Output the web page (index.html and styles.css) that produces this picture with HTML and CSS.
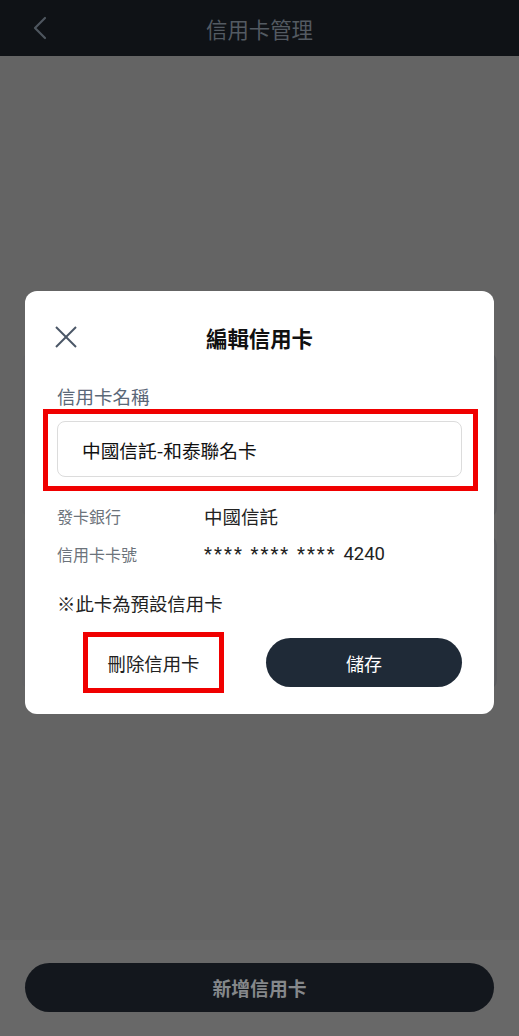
FILE: index.html
```html
<!DOCTYPE html>
<html lang="zh-Hant">
<head>
  <meta charset="UTF-8">
  <meta name="viewport" content="width=device-width, initial-scale=1.0">
  <title>信用卡管理</title>
  <link rel="stylesheet" href="styles.css">
</head>
<body>
  <header class="topbar">
    <svg class="back" width="14" height="24" viewBox="0 0 14 24">
      <polyline points="12,2 2,12 12,22" fill="none" stroke="#4e565e" stroke-width="2.2" stroke-linecap="round" stroke-linejoin="round"/>
    </svg>
    <h1 class="topbar-title">信用卡管理</h1>
  </header>

  <main class="content">
    <div class="card-bg card-bg-1"></div>
    <div class="card-bg card-bg-2"></div>
  </main>

  <div class="bottom-bar">
    <button class="add-btn">新增信用卡</button>
  </div>

  <div class="overlay">
    <div class="modal">
      <div class="modal-head">
        <svg class="close" width="22" height="22" viewBox="0 0 22 22">
          <line x1="1" y1="1" x2="21" y2="21" stroke="#4a5666" stroke-width="2"/>
          <line x1="21" y1="1" x2="1" y2="21" stroke="#4a5666" stroke-width="2"/>
        </svg>
        <h2 class="modal-title">編輯信用卡</h2>
      </div>

      <div class="field-label">信用卡名稱</div>
      <div class="mark mark-input">
        <div class="name-input">中國信託-和泰聯名卡</div>
      </div>

      <div class="info-row">
        <span class="info-label">發卡銀行</span>
        <span class="info-value">中國信託</span>
      </div>
      <div class="info-row">
        <span class="info-label">信用卡卡號</span>
        <span class="info-value card-number"><span class="mask">**** **** **** </span>4240</span>
      </div>

      <p class="note">※此卡為預設信用卡</p>

      <div class="actions">
        <div class="mark mark-delete">
          <button class="delete-btn">刪除信用卡</button>
        </div>
        <button class="save-btn">儲存</button>
      </div>
    </div>
  </div>
</body>
</html>
```

FILE: styles.css
```css
:root {
  --cinza-fundo: #646464;
  --escuro: #0f1216;
  --azul-escuro: #1f2a37;
  --vermelho: #f00000;
}

* {
  box-sizing: border-box;
}

body {
  margin: 0;
  height: 1036px;
  display: flex;
  flex-direction: column;
  font-family: "Noto Sans CJK TC", "Noto Sans", sans-serif;
  background-color: var(--cinza-fundo);
  overflow: hidden;
}

.topbar {
  height: 56px;
  background-color: var(--escuro);
  display: flex;
  align-items: center;
  justify-content: center;
  position: relative;
}

.topbar .back {
  position: absolute;
  left: 33px;
  top: 16px;
}

.topbar-title {
  margin: 0;
  font-size: 21.4px;
  font-weight: 400;
  color: #535a62;
}

.content {
  flex: 1;
  padding: 296px 22px 0;
  display: flex;
  flex-direction: column;
  gap: 17px;
}

.card-bg {
  background-color: #626264;
  border-right: 2px solid #5a5b5e;
  border-radius: 10px;
}

.card-bg-1 {
  height: 166px;
}

.card-bg-2 {
  height: 155px;
}

.bottom-bar {
  height: 96px;
  background-color: #686868;
  padding: 23px 25px 0;
}

.add-btn {
  width: 100%;
  height: 49px;
  border: none;
  border-radius: 25px;
  background-color: #13171d;
  color: #85888b;
  font-family: inherit;
  font-size: 18.8px;
  font-weight: 700;
}

.overlay {
  position: fixed;
  inset: 0;
  display: flex;
  justify-content: center;
  align-items: flex-start;
  padding-top: 291px;
}

.modal {
  width: 469px;
  background: #fff;
  border-radius: 12px;
  padding: 24px 32px 21px 32px;
}

.modal-head {
  height: 44px;
  display: flex;
  align-items: center;
  justify-content: center;
  position: relative;
}

.modal-head .close {
  position: absolute;
  left: -2px;
  top: 11px;
}

.modal-title {
  margin: 0;
  font-size: 21.4px;
  font-weight: 700;
  color: #111;
}

.field-label {
  margin-top: 25px;
  font-size: 18.5px;
  line-height: 24px;
  color: #5b6878;
}

.mark {
  border: 5px solid var(--vermelho);
}

.mark-input {
  margin: 1px -16px 0 -14px;
  padding: 7px 11px 9px 9px;
}

.name-input {
  height: 56px;
  border: 1px solid #dcdcdc;
  border-radius: 8px;
  padding-left: 24px;
  display: flex;
  align-items: center;
  font-size: 18.7px;
  color: #111;
}

.info-row {
  display: flex;
  align-items: center;
  height: 24px;
  margin-top: 13px;
}

.info-row + .info-row {
  margin-top: 14px;
}

.info-label {
  width: 147px;
  font-size: 16px;
  color: #6c737b;
}

.info-value {
  font-size: 18.5px;
  color: #222;
}

.card-number {
  font-family: Roboto, "Noto Sans CJK TC", sans-serif;
  font-size: 18.5px;
}

.card-number .mask {
  letter-spacing: 2px;
}

.note {
  margin: 25px 0 0;
  font-size: 18.4px;
  line-height: 24px;
  color: #222;
}

.actions {
  margin-top: 17px;
  display: flex;
  align-items: center;
}

.mark-delete {
  margin-left: 26px;
  width: 141px;
  height: 61px;
  display: flex;
  align-items: center;
  justify-content: center;
}

.delete-btn {
  border: none;
  background: none;
  font-family: inherit;
  font-size: 18.4px;
  color: #222;
  padding: 0;
}

.save-btn {
  margin-left: 42px;
  width: 196px;
  height: 49px;
  border: none;
  border-radius: 25px;
  background-color: var(--azul-escuro);
  color: #fff;
  font-family: inherit;
  font-size: 18px;
}
```
